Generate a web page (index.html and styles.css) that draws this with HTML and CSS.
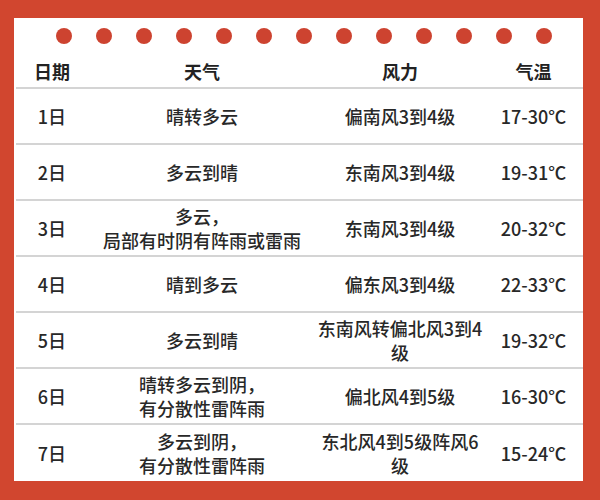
FILE: index.html
```html
<!DOCTYPE html>
<html lang="zh">
<head>
<meta charset="utf-8">
<link rel="stylesheet" href="styles.css">
</head>
<body>
<div class="panel">
  <div class="dots">
    <span class="dot"></span><span class="dot"></span><span class="dot"></span><span class="dot"></span><span class="dot"></span><span class="dot"></span><span class="dot"></span><span class="dot"></span><span class="dot"></span><span class="dot"></span><span class="dot"></span><span class="dot"></span><span class="dot"></span>
  </div>
  <div class="table">
    <div class="row head">
      <div class="cell">日期</div>
      <div class="cell">天气</div>
      <div class="cell">风力</div>
      <div class="cell">气温</div>
    </div>
    <div class="row">
      <div class="cell">1日</div>
      <div class="cell">晴转多云</div>
      <div class="cell">偏南风3到4级</div>
      <div class="cell">17-30℃</div>
    </div>
    <div class="row">
      <div class="cell">2日</div>
      <div class="cell">多云到晴</div>
      <div class="cell">东南风3到4级</div>
      <div class="cell">19-31℃</div>
    </div>
    <div class="row">
      <div class="cell">3日</div>
      <div class="cell">多云，<br>局部有时阴有阵雨或雷雨</div>
      <div class="cell">东南风3到4级</div>
      <div class="cell">20-32℃</div>
    </div>
    <div class="row">
      <div class="cell">4日</div>
      <div class="cell">晴到多云</div>
      <div class="cell">偏东风3到4级</div>
      <div class="cell">22-33℃</div>
    </div>
    <div class="row">
      <div class="cell">5日</div>
      <div class="cell">多云到晴</div>
      <div class="cell">东南风转偏北风3到4级</div>
      <div class="cell">19-32℃</div>
    </div>
    <div class="row">
      <div class="cell">6日</div>
      <div class="cell">晴转多云到阴，<br>有分散性雷阵雨</div>
      <div class="cell">偏北风4到5级</div>
      <div class="cell">16-30℃</div>
    </div>
    <div class="row last">
      <div class="cell">7日</div>
      <div class="cell">多云到阴，<br>有分散性雷阵雨</div>
      <div class="cell">东北风4到5级阵风6级</div>
      <div class="cell">15-24℃</div>
    </div>
  </div>
</div>
</body>
</html>
```
FILE: styles.css
```css
html, body {
  margin: 0;
  padding: 0;
}
body {
  width: 600px;
  height: 500px;
  background: #d1462f;
  overflow: hidden;
  padding-top: 18px;
  box-sizing: border-box;
  font-family: "Noto Sans CJK SC", "Noto Sans", sans-serif;
}
.panel {
  margin-left: 14px;
  width: 569px;
  height: 463px;
  background: #ffffff;
  padding-top: 10px;
  box-sizing: border-box;
}
.dots {
  display: flex;
  gap: 24px;
  padding-left: 42px;
  height: 16px;
}
.dot {
  width: 16px;
  height: 16px;
  border-radius: 50%;
  background: #cd4330;
  flex: none;
}
.table {
  margin-left: 2px;
}
.row {
  display: grid;
  grid-template-columns: 72px 228px 168px 99px;
  height: 54px;
  border-bottom: 2px solid #d4d4d4;
  align-items: center;
  color: #282828;
  font-size: 18px;
  font-weight: 500;
  line-height: 24px;
}
.row.last {
  border-bottom: none;
  height: 55px;
}
.row.head {
  height: 45px;
  align-items: start;
  padding-top: 15px;
  box-sizing: border-box;
  font-weight: 700;
  color: #222222;
  line-height: 25px;
}
.cell {
  text-align: center;
}
```
